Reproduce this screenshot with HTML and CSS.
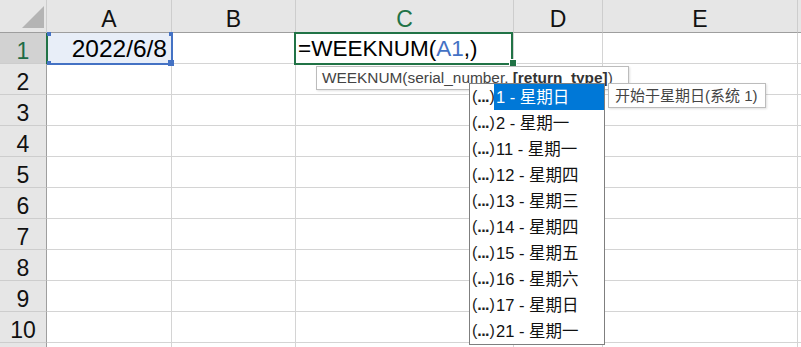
FILE: index.html
```html
<!DOCTYPE html>
<html lang="zh-CN">
<head>
<meta charset="utf-8">
<title>WEEKNUM</title>
<link rel="stylesheet" href="styles.css">
</head>
<body>
<div class="sheet">
  <div class="grid">
    <div class="hd corner"><span class="tri"></span></div>
    <div class="hd">A</div>
    <div class="hd">B</div>
    <div class="hd active-col">C</div>
    <div class="hd">D</div>
    <div class="hd">E</div>
    <div class="hd last"></div>

    <div class="rh active-row">1</div>
    <div class="c ref">2022/6/8<i class="h tl"></i><i class="h tr"></i><i class="h bl"></i><i class="h br"></i></div>
    <div class="c"></div>
    <div class="c edit">=WEEKNUM(<span class="refword">A1</span>,)<i class="gh"></i></div>
    <div class="c"></div>
    <div class="c"></div>
    <div class="c"></div>

    <div class="rh">2</div><div class="c"></div><div class="c"></div><div class="c"></div><div class="c"></div><div class="c"></div><div class="c"></div>
    <div class="rh">3</div><div class="c"></div><div class="c"></div><div class="c"></div><div class="c"></div><div class="c"></div><div class="c"></div>
    <div class="rh">4</div><div class="c"></div><div class="c"></div><div class="c"></div><div class="c"></div><div class="c"></div><div class="c"></div>
    <div class="rh">5</div><div class="c"></div><div class="c"></div><div class="c"></div><div class="c"></div><div class="c"></div><div class="c"></div>
    <div class="rh">6</div><div class="c"></div><div class="c"></div><div class="c"></div><div class="c"></div><div class="c"></div><div class="c"></div>
    <div class="rh">7</div><div class="c"></div><div class="c"></div><div class="c"></div><div class="c"></div><div class="c"></div><div class="c"></div>
    <div class="rh">8</div><div class="c"></div><div class="c"></div><div class="c"></div><div class="c"></div><div class="c"></div><div class="c"></div>
    <div class="rh">9</div><div class="c"></div><div class="c"></div><div class="c"></div><div class="c"></div><div class="c"></div><div class="c"></div>
    <div class="rh">10</div><div class="c"></div><div class="c"></div><div class="c"></div><div class="c"></div><div class="c"></div><div class="c"></div>
    <div class="rh"></div><div class="c"></div><div class="c"></div><div class="c"></div><div class="c"></div><div class="c"></div><div class="c"></div>
  </div>

  <div class="tip">WEEKNUM(serial_number, <b>[return_type]</b>)</div>

  <ul class="list">
    <li class="item sel"><span class="ic">(<b>...</b>)</span><span class="lb">1 - 星期日</span></li>
    <li class="item"><span class="ic">(<b>...</b>)</span><span class="lb">2 - 星期一</span></li>
    <li class="item"><span class="ic">(<b>...</b>)</span><span class="lb">11 - 星期一</span></li>
    <li class="item"><span class="ic">(<b>...</b>)</span><span class="lb">12 - 星期四</span></li>
    <li class="item"><span class="ic">(<b>...</b>)</span><span class="lb">13 - 星期三</span></li>
    <li class="item"><span class="ic">(<b>...</b>)</span><span class="lb">14 - 星期四</span></li>
    <li class="item"><span class="ic">(<b>...</b>)</span><span class="lb">15 - 星期五</span></li>
    <li class="item"><span class="ic">(<b>...</b>)</span><span class="lb">16 - 星期六</span></li>
    <li class="item"><span class="ic">(<b>...</b>)</span><span class="lb">17 - 星期日</span></li>
    <li class="item"><span class="ic">(<b>...</b>)</span><span class="lb">21 - 星期一</span></li>
  </ul>

  <div class="desc">开始于星期日(系统 1)</div>
</div>
</body>
</html>
```

FILE: styles.css
```css
* { box-sizing: border-box; }

html, body {
  margin: 0;
  padding: 0;
  background: #ffffff;
  overflow: hidden;
}

body {
  width: 801px;
  height: 347px;
  font-family: "Liberation Sans", "Noto Sans CJK SC", sans-serif;
  color: #000;
}

.sheet {
  position: relative;
  width: 801px;
  height: 347px;
  overflow: hidden;
}

.grid {
  display: grid;
  grid-template-columns: 47px 125px 124px 218px 89px 195px 20px;
  grid-template-rows: 33px repeat(11, 31px);
}

.hd {
  background: #e6e6e6;
  border-right: 1px solid #cdcdcd;
  border-bottom: 1px solid #9e9e9e;
  font-size: 23px;
  text-align: center;
  line-height: 32px;
  padding-top: 3px;
  color: #111;
}

.hd.corner {
  position: relative;
  border-right-color: #cdcdcd;
}

.tri {
  position: absolute;
  left: 22px;
  top: 6px;
  width: 22px;
  height: 22px;
  background: #b4b4b4;
  clip-path: polygon(100% 0, 100% 100%, 0 100%);
}

.hd.active-col { color: #217346; }

.rh {
  background: #e6e6e6;
  border-right: 1px solid #9e9e9e;
  border-bottom: 1px solid #cdcdcd;
  font-size: 23px;
  text-align: center;
  line-height: 30px;
  padding-top: 3px;
  color: #111;
}

.rh.active-row {
  position: relative;
  background: #d2d2d2;
  color: #1e6b45;
}

.rh.active-row::after {
  content: "";
  position: absolute;
  right: -2px;
  top: 0;
  bottom: -1px;
  width: 2px;
  background: #217346;
  z-index: 3;
}

.c {
  border-right: 1px solid #d4d4d4;
  border-bottom: 1px solid #d4d4d4;
  background: #fff;
}

.c.ref {
  position: relative;
  background: #e8eef8;
  font-size: 24.5px;
  text-align: right;
  line-height: 30px;
  padding-right: 4px;
  padding-top: 1px;
}

.c.ref::after {
  content: "";
  position: absolute;
  left: 0;
  top: 0;
  right: -2px;
  bottom: -2px;
  border-right: 2px solid #4472c4;
  border-bottom: 2px solid #4472c4;
  z-index: 2;
}

.h {
  position: absolute;
  width: 4px;
  height: 4px;
  background: #4472c4;
  z-index: 3;
}
.h.tl { left: 0; top: -1px; }
.h.tr { right: -2px; top: -1px; }
.h.bl { left: 0; bottom: -2px; }
.h.br { right: -3px; bottom: -3px; width: 6px; height: 6px; }

.c.edit {
  position: relative;
  font-size: 22.5px;
  line-height: 30px;
  padding-left: 2px;
  padding-top: 1px;
  white-space: nowrap;
}

.c.edit::after {
  content: "";
  position: absolute;
  left: -2px;
  top: -1px;
  right: 0;
  bottom: -2px;
  border: 2px solid #217346;
  z-index: 2;
}

.refword { color: #4472c4; }

.gh {
  position: absolute;
  right: -3px;
  bottom: -3px;
  width: 6px;
  height: 6px;
  background: #217346;
  outline: 1px solid #fff;
  z-index: 3;
}

.tip {
  position: absolute;
  left: 316px;
  top: 66px;
  width: 313px;
  height: 24px;
  background: #fff;
  border: 1px solid #bcbcbc;
  box-shadow: 1px 1px 2px rgba(0, 0, 0, 0.12);
  color: #444;
  font-size: 15.4px;
  line-height: 22px;
  padding-left: 5px;
  white-space: nowrap;
  z-index: 5;
}

.tip b { color: #333; }

.list {
  position: absolute;
  left: 469px;
  top: 83px;
  width: 136px;
  height: 262px;
  margin: 0;
  padding: 0;
  list-style: none;
  background: #fff;
  border: 1px solid #7f7f7f;
  z-index: 6;
}

.item {
  display: flex;
  height: 26px;
  align-items: stretch;
  font-size: 16.5px;
  line-height: 26px;
  white-space: nowrap;
}

.ic {
  width: 24px;
  padding-left: 2px;
  color: #222;
  font-size: 16px;
}

.ic b { letter-spacing: -0.6px; margin-right: 0.6px; }

.lb {
  flex: 1;
  padding-left: 2px;
  color: #111;
}

.item.sel .lb {
  background: #0078d7;
  color: #fff;
}

.desc {
  position: absolute;
  left: 608px;
  top: 83px;
  width: 158px;
  height: 25px;
  background: #fff;
  border: 1px solid #bcbcbc;
  box-shadow: 1px 1px 2px rgba(0, 0, 0, 0.12);
  color: #444;
  font-size: 15px;
  line-height: 23px;
  padding-left: 6px;
  white-space: nowrap;
  z-index: 6;
}
```
